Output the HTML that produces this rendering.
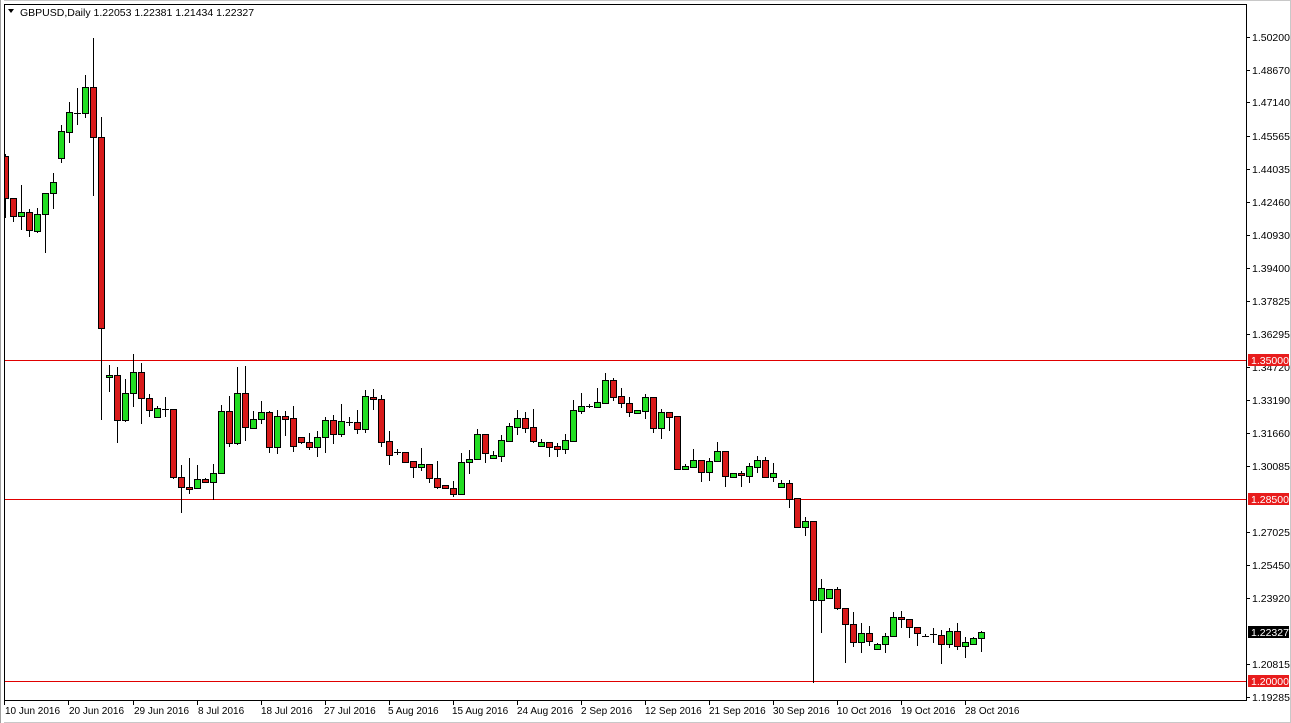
<!DOCTYPE html>
<html><head><meta charset="utf-8"><style>
html,body{margin:0;padding:0;background:#fff;width:1291px;height:723px;overflow:hidden}
svg{display:block;font-family:"Liberation Sans",sans-serif}
.w{stroke:#000;stroke-width:1}
.g{fill:#22dd22;stroke:#000;stroke-width:1}
.r{fill:#d81a1a;stroke:#000;stroke-width:1}
.ax{font-size:10.5px;fill:#000}
.dt{font-size:10px;fill:#000}
</style></head><body>
<svg width="1291" height="723" viewBox="0 0 1291 723">
<rect x="0.5" y="0.5" width="1290" height="722" fill="#fff" stroke="#c8c8c8"/>
<!-- horizontal levels -->
<rect x="4" y="360" width="1242" height="1" fill="#e00000"/>
<rect x="4" y="499" width="1242" height="1" fill="#e00000"/>
<rect x="4" y="681" width="1242" height="1" fill="#e00000"/>
<g id="c">
<line class="w" x1="5.5" x2="5.5" y1="154" y2="218"/><rect class="r" x="2.5" y="156.5" width="6" height="42"/>
<line class="w" x1="13.5" x2="13.5" y1="198" y2="222"/><rect class="r" x="10.5" y="198.5" width="6" height="18"/>
<line class="w" x1="21.5" x2="21.5" y1="185" y2="230"/><rect class="g" x="18.5" y="212.5" width="6" height="4"/>
<line class="w" x1="29.5" x2="29.5" y1="209" y2="237"/><rect class="r" x="26.5" y="212.5" width="6" height="18"/>
<line class="w" x1="37.5" x2="37.5" y1="208" y2="233"/><rect class="g" x="34.5" y="214.5" width="6" height="17"/>
<line class="w" x1="45.5" x2="45.5" y1="193" y2="253"/><rect class="g" x="42.5" y="193.5" width="6" height="21"/>
<line class="w" x1="53.5" x2="53.5" y1="173" y2="209"/><rect class="g" x="50.5" y="182.5" width="6" height="11"/>
<line class="w" x1="61.5" x2="61.5" y1="125" y2="163"/><rect class="g" x="58.5" y="131.5" width="6" height="27"/>
<line class="w" x1="69.5" x2="69.5" y1="102" y2="143"/><rect class="g" x="66.5" y="112.5" width="6" height="20"/>
<line class="w" x1="77.5" x2="77.5" y1="88" y2="125"/><line class="w" x1="74" x2="81" y1="113.5" y2="113.5"/>
<line class="w" x1="85.5" x2="85.5" y1="75" y2="118"/><rect class="g" x="82.5" y="87.5" width="6" height="26"/>
<line class="w" x1="93.5" x2="93.5" y1="38" y2="196"/><rect class="r" x="90.5" y="87.5" width="6" height="50"/>
<line class="w" x1="101.5" x2="101.5" y1="117" y2="420"/><rect class="r" x="98.5" y="137.5" width="6" height="191"/>
<line class="w" x1="109.5" x2="109.5" y1="365" y2="392"/><rect class="g" x="106.5" y="375.5" width="6" height="2"/>
<line class="w" x1="117.5" x2="117.5" y1="367" y2="443"/><rect class="r" x="114.5" y="375.5" width="6" height="45"/>
<line class="w" x1="125.5" x2="125.5" y1="379" y2="422"/><rect class="g" x="122.5" y="393.5" width="6" height="27"/>
<line class="w" x1="133.5" x2="133.5" y1="354" y2="407"/><rect class="g" x="130.5" y="372.5" width="6" height="21"/>
<line class="w" x1="141.5" x2="141.5" y1="363" y2="424"/><rect class="r" x="138.5" y="372.5" width="6" height="26"/>
<line class="w" x1="149.5" x2="149.5" y1="394" y2="417"/><rect class="r" x="146.5" y="398.5" width="6" height="12"/>
<line class="w" x1="157.5" x2="157.5" y1="406" y2="417"/><rect class="g" x="154.5" y="408.5" width="6" height="9"/>
<line class="w" x1="165.5" x2="165.5" y1="397" y2="417"/><line class="w" x1="162" x2="169" y1="409.5" y2="409.5"/>
<line class="w" x1="173.5" x2="173.5" y1="409" y2="479"/><rect class="r" x="170.5" y="409.5" width="6" height="68"/>
<line class="w" x1="181.5" x2="181.5" y1="465" y2="513"/><rect class="r" x="178.5" y="477.5" width="6" height="10"/>
<line class="w" x1="189.5" x2="189.5" y1="458" y2="494"/><rect class="r" x="186.5" y="487.5" width="6" height="2"/>
<line class="w" x1="197.5" x2="197.5" y1="465" y2="489"/><rect class="g" x="194.5" y="479.5" width="6" height="9"/>
<line class="w" x1="205.5" x2="205.5" y1="478" y2="483"/><rect class="r" x="202.5" y="479.5" width="6" height="3"/>
<line class="w" x1="213.5" x2="213.5" y1="464" y2="500"/><rect class="g" x="210.5" y="473.5" width="6" height="9"/>
<line class="w" x1="221.5" x2="221.5" y1="405" y2="473"/><rect class="g" x="218.5" y="411.5" width="6" height="62"/>
<line class="w" x1="229.5" x2="229.5" y1="396" y2="447"/><rect class="r" x="226.5" y="411.5" width="6" height="32"/>
<line class="w" x1="237.5" x2="237.5" y1="367" y2="445"/><rect class="g" x="234.5" y="393.5" width="6" height="50"/>
<line class="w" x1="245.5" x2="245.5" y1="366" y2="441"/><rect class="r" x="242.5" y="393.5" width="6" height="34"/>
<line class="w" x1="253.5" x2="253.5" y1="411" y2="429"/><rect class="g" x="250.5" y="419.5" width="6" height="9"/>
<line class="w" x1="261.5" x2="261.5" y1="401" y2="424"/><rect class="g" x="258.5" y="412.5" width="6" height="7"/>
<line class="w" x1="269.5" x2="269.5" y1="411" y2="453"/><rect class="r" x="266.5" y="412.5" width="6" height="35"/>
<line class="w" x1="277.5" x2="277.5" y1="410" y2="454"/><rect class="g" x="274.5" y="416.5" width="6" height="31"/>
<line class="w" x1="285.5" x2="285.5" y1="411" y2="436"/><rect class="r" x="282.5" y="416.5" width="6" height="3"/>
<line class="w" x1="293.5" x2="293.5" y1="406" y2="452"/><rect class="r" x="290.5" y="418.5" width="6" height="28"/>
<line class="w" x1="301.5" x2="301.5" y1="437" y2="444"/><rect class="r" x="298.5" y="437.5" width="6" height="5"/>
<line class="w" x1="309.5" x2="309.5" y1="433" y2="450"/><rect class="r" x="306.5" y="442.5" width="6" height="5"/>
<line class="w" x1="317.5" x2="317.5" y1="431" y2="457"/><rect class="g" x="314.5" y="437.5" width="6" height="10"/>
<line class="w" x1="325.5" x2="325.5" y1="417" y2="453"/><rect class="g" x="322.5" y="420.5" width="6" height="17"/>
<line class="w" x1="333.5" x2="333.5" y1="415" y2="444"/><rect class="r" x="330.5" y="420.5" width="6" height="14"/>
<line class="w" x1="341.5" x2="341.5" y1="404" y2="437"/><rect class="g" x="338.5" y="421.5" width="6" height="13"/>
<line class="w" x1="349.5" x2="349.5" y1="417" y2="426"/><line class="w" x1="346" x2="353" y1="422.5" y2="422.5"/>
<line class="w" x1="357.5" x2="357.5" y1="410" y2="434"/><rect class="r" x="354.5" y="422.5" width="6" height="7"/>
<line class="w" x1="365.5" x2="365.5" y1="390" y2="433"/><rect class="g" x="362.5" y="396.5" width="6" height="33"/>
<line class="w" x1="373.5" x2="373.5" y1="389" y2="410"/><rect class="r" x="370.5" y="397.5" width="6" height="2"/>
<line class="w" x1="381.5" x2="381.5" y1="395" y2="447"/><rect class="r" x="378.5" y="399.5" width="6" height="43"/>
<line class="w" x1="389.5" x2="389.5" y1="431" y2="465"/><rect class="r" x="386.5" y="441.5" width="6" height="14"/>
<line class="w" x1="397.5" x2="397.5" y1="449" y2="455"/><line class="w" x1="394" x2="401" y1="452.5" y2="452.5"/>
<line class="w" x1="405.5" x2="405.5" y1="452" y2="463"/><rect class="r" x="402.5" y="452.5" width="6" height="10"/>
<line class="w" x1="413.5" x2="413.5" y1="461" y2="478"/><rect class="r" x="410.5" y="461.5" width="6" height="6"/>
<line class="w" x1="421.5" x2="421.5" y1="448" y2="471"/><rect class="g" x="418.5" y="464.5" width="6" height="3"/>
<line class="w" x1="429.5" x2="429.5" y1="464" y2="483"/><rect class="r" x="426.5" y="464.5" width="6" height="14"/>
<line class="w" x1="437.5" x2="437.5" y1="461" y2="489"/><rect class="r" x="434.5" y="478.5" width="6" height="9"/>
<line class="w" x1="445.5" x2="445.5" y1="485" y2="488"/><rect class="r" x="442.5" y="485.5" width="6" height="3"/>
<line class="w" x1="453.5" x2="453.5" y1="481" y2="497"/><rect class="r" x="450.5" y="488.5" width="6" height="6"/>
<line class="w" x1="461.5" x2="461.5" y1="453" y2="494"/><rect class="g" x="458.5" y="462.5" width="6" height="32"/>
<line class="w" x1="469.5" x2="469.5" y1="450" y2="474"/><rect class="g" x="466.5" y="459.5" width="6" height="3"/>
<line class="w" x1="477.5" x2="477.5" y1="429" y2="459"/><rect class="g" x="474.5" y="434.5" width="6" height="25"/>
<line class="w" x1="485.5" x2="485.5" y1="434" y2="463"/><rect class="r" x="482.5" y="434.5" width="6" height="19"/>
<line class="w" x1="493.5" x2="493.5" y1="451" y2="458"/><rect class="g" x="490.5" y="455.5" width="6" height="3"/>
<line class="w" x1="501.5" x2="501.5" y1="435" y2="462"/><rect class="g" x="498.5" y="440.5" width="6" height="16"/>
<line class="w" x1="509.5" x2="509.5" y1="423" y2="441"/><rect class="g" x="506.5" y="426.5" width="6" height="15"/>
<line class="w" x1="517.5" x2="517.5" y1="410" y2="435"/><rect class="g" x="514.5" y="418.5" width="6" height="9"/>
<line class="w" x1="525.5" x2="525.5" y1="412" y2="433"/><rect class="r" x="522.5" y="418.5" width="6" height="10"/>
<line class="w" x1="533.5" x2="533.5" y1="409" y2="443"/><rect class="r" x="530.5" y="427.5" width="6" height="14"/>
<line class="w" x1="541.5" x2="541.5" y1="439" y2="446"/><rect class="g" x="538.5" y="442.5" width="6" height="4"/>
<line class="w" x1="549.5" x2="549.5" y1="442" y2="457"/><rect class="r" x="546.5" y="442.5" width="6" height="5"/>
<line class="w" x1="557.5" x2="557.5" y1="443" y2="457"/><rect class="r" x="554.5" y="446.5" width="6" height="3"/>
<line class="w" x1="565.5" x2="565.5" y1="434" y2="454"/><rect class="g" x="562.5" y="440.5" width="6" height="9"/>
<line class="w" x1="573.5" x2="573.5" y1="400" y2="441"/><rect class="g" x="570.5" y="410.5" width="6" height="31"/>
<line class="w" x1="581.5" x2="581.5" y1="393" y2="414"/><rect class="g" x="578.5" y="406.5" width="6" height="5"/>
<line class="w" x1="589.5" x2="589.5" y1="404" y2="408"/><line class="w" x1="586" x2="593" y1="406.5" y2="406.5"/>
<line class="w" x1="597.5" x2="597.5" y1="388" y2="407"/><rect class="g" x="594.5" y="402.5" width="6" height="5"/>
<line class="w" x1="605.5" x2="605.5" y1="373" y2="404"/><rect class="g" x="602.5" y="380.5" width="6" height="23"/>
<line class="w" x1="613.5" x2="613.5" y1="378" y2="401"/><rect class="r" x="610.5" y="380.5" width="6" height="17"/>
<line class="w" x1="621.5" x2="621.5" y1="388" y2="408"/><rect class="r" x="618.5" y="396.5" width="6" height="7"/>
<line class="w" x1="629.5" x2="629.5" y1="397" y2="417"/><rect class="r" x="626.5" y="403.5" width="6" height="9"/>
<line class="w" x1="637.5" x2="637.5" y1="410" y2="414"/><rect class="g" x="634.5" y="410.5" width="6" height="3"/>
<line class="w" x1="645.5" x2="645.5" y1="394" y2="419"/><rect class="g" x="642.5" y="397.5" width="6" height="14"/>
<line class="w" x1="653.5" x2="653.5" y1="397" y2="433"/><rect class="r" x="650.5" y="397.5" width="6" height="31"/>
<line class="w" x1="661.5" x2="661.5" y1="409" y2="439"/><rect class="g" x="658.5" y="412.5" width="6" height="16"/>
<line class="w" x1="669.5" x2="669.5" y1="412" y2="431"/><rect class="r" x="666.5" y="412.5" width="6" height="5"/>
<line class="w" x1="677.5" x2="677.5" y1="416" y2="469"/><rect class="r" x="674.5" y="416.5" width="6" height="53"/>
<line class="w" x1="685.5" x2="685.5" y1="464" y2="469"/><rect class="g" x="682.5" y="466.5" width="6" height="3"/>
<line class="w" x1="693.5" x2="693.5" y1="449" y2="467"/><rect class="g" x="690.5" y="460.5" width="6" height="7"/>
<line class="w" x1="701.5" x2="701.5" y1="460" y2="482"/><rect class="r" x="698.5" y="460.5" width="6" height="12"/>
<line class="w" x1="709.5" x2="709.5" y1="458" y2="481"/><rect class="g" x="706.5" y="461.5" width="6" height="11"/>
<line class="w" x1="717.5" x2="717.5" y1="442" y2="461"/><rect class="g" x="714.5" y="451.5" width="6" height="10"/>
<line class="w" x1="725.5" x2="725.5" y1="451" y2="487"/><rect class="r" x="722.5" y="451.5" width="6" height="25"/>
<line class="w" x1="733.5" x2="733.5" y1="473" y2="478"/><rect class="g" x="730.5" y="473.5" width="6" height="4"/>
<line class="w" x1="741.5" x2="741.5" y1="471" y2="487"/><rect class="r" x="738.5" y="473.5" width="6" height="2"/>
<line class="w" x1="749.5" x2="749.5" y1="463" y2="483"/><rect class="g" x="746.5" y="466.5" width="6" height="10"/>
<line class="w" x1="757.5" x2="757.5" y1="456" y2="473"/><rect class="g" x="754.5" y="460.5" width="6" height="7"/>
<line class="w" x1="765.5" x2="765.5" y1="457" y2="478"/><rect class="r" x="762.5" y="460.5" width="6" height="17"/>
<line class="w" x1="773.5" x2="773.5" y1="463" y2="482"/><rect class="g" x="770.5" y="473.5" width="6" height="4"/>
<line class="w" x1="781.5" x2="781.5" y1="480" y2="487"/><rect class="g" x="778.5" y="483.5" width="6" height="4"/>
<line class="w" x1="789.5" x2="789.5" y1="480" y2="508"/><rect class="r" x="786.5" y="483.5" width="6" height="16"/>
<line class="w" x1="797.5" x2="797.5" y1="498" y2="528"/><rect class="r" x="794.5" y="498.5" width="6" height="29"/>
<line class="w" x1="805.5" x2="805.5" y1="517" y2="536"/><rect class="g" x="802.5" y="521.5" width="6" height="6"/>
<line class="w" x1="813.5" x2="813.5" y1="521" y2="683"/><rect class="r" x="810.5" y="521.5" width="6" height="79"/>
<line class="w" x1="821.5" x2="821.5" y1="579" y2="633"/><rect class="g" x="818.5" y="588.5" width="6" height="12"/>
<line class="w" x1="829.5" x2="829.5" y1="589" y2="598"/><rect class="g" x="826.5" y="589.5" width="6" height="9"/>
<line class="w" x1="837.5" x2="837.5" y1="587" y2="610"/><rect class="r" x="834.5" y="589.5" width="6" height="19"/>
<line class="w" x1="845.5" x2="845.5" y1="608" y2="663"/><rect class="r" x="842.5" y="608.5" width="6" height="16"/>
<line class="w" x1="853.5" x2="853.5" y1="612" y2="647"/><rect class="r" x="850.5" y="624.5" width="6" height="18"/>
<line class="w" x1="861.5" x2="861.5" y1="623" y2="653"/><rect class="g" x="858.5" y="633.5" width="6" height="9"/>
<line class="w" x1="869.5" x2="869.5" y1="626" y2="646"/><rect class="r" x="866.5" y="633.5" width="6" height="8"/>
<line class="w" x1="877.5" x2="877.5" y1="643" y2="650"/><rect class="g" x="874.5" y="644.5" width="6" height="5"/>
<line class="w" x1="885.5" x2="885.5" y1="633" y2="653"/><rect class="g" x="882.5" y="636.5" width="6" height="8"/>
<line class="w" x1="893.5" x2="893.5" y1="612" y2="636"/><rect class="g" x="890.5" y="617.5" width="6" height="19"/>
<line class="w" x1="901.5" x2="901.5" y1="611" y2="628"/><rect class="r" x="898.5" y="617.5" width="6" height="2"/>
<line class="w" x1="909.5" x2="909.5" y1="619" y2="638"/><rect class="r" x="906.5" y="619.5" width="6" height="8"/>
<line class="w" x1="917.5" x2="917.5" y1="627" y2="646"/><rect class="r" x="914.5" y="627.5" width="6" height="6"/>
<line class="w" x1="925.5" x2="925.5" y1="634" y2="637"/><line class="w" x1="922" x2="929" y1="636.5" y2="636.5"/>
<line class="w" x1="933.5" x2="933.5" y1="628" y2="643"/><line class="w" x1="930" x2="937" y1="634.5" y2="634.5"/>
<line class="w" x1="941.5" x2="941.5" y1="630" y2="664"/><rect class="r" x="938.5" y="635.5" width="6" height="9"/>
<line class="w" x1="949.5" x2="949.5" y1="628" y2="648"/><rect class="g" x="946.5" y="631.5" width="6" height="13"/>
<line class="w" x1="957.5" x2="957.5" y1="623" y2="650"/><rect class="r" x="954.5" y="631.5" width="6" height="15"/>
<line class="w" x1="965.5" x2="965.5" y1="637" y2="658"/><rect class="g" x="962.5" y="642.5" width="6" height="4"/>
<line class="w" x1="973.5" x2="973.5" y1="637" y2="644"/><rect class="g" x="970.5" y="638.5" width="6" height="6"/>
<line class="w" x1="981.5" x2="981.5" y1="631" y2="652"/><rect class="g" x="978.5" y="632.5" width="6" height="6"/>
</g>
<!-- plot frame -->
<rect x="4.5" y="4.5" width="1242" height="696" fill="none" stroke="#000"/>
<rect x="0" y="0" width="4" height="723" fill="#fff"/>
<line x1="0.5" x2="0.5" y1="0" y2="723" stroke="#a0a0a0"/>
<!-- header -->
<path d="M8 9 L14 9 L11 13 Z" fill="#000"/>
<text x="20" y="16" class="ax">GBPUSD,Daily  1.22053 1.22381 1.21434 1.22327</text>
<!-- price axis -->
<g class="ax">
<g stroke="#000">
<line x1="1246" x2="1250" y1="37.5" y2="37.5"/><line x1="1246" x2="1250" y1="70.5" y2="70.5"/><line x1="1246" x2="1250" y1="102.5" y2="102.5"/><line x1="1246" x2="1250" y1="136.5" y2="136.5"/><line x1="1246" x2="1250" y1="169.5" y2="169.5"/><line x1="1246" x2="1250" y1="202.5" y2="202.5"/><line x1="1246" x2="1250" y1="235.5" y2="235.5"/><line x1="1246" x2="1250" y1="268.5" y2="268.5"/><line x1="1246" x2="1250" y1="301.5" y2="301.5"/><line x1="1246" x2="1250" y1="334.5" y2="334.5"/><line x1="1246" x2="1250" y1="367.5" y2="367.5"/><line x1="1246" x2="1250" y1="400.5" y2="400.5"/><line x1="1246" x2="1250" y1="433.5" y2="433.5"/><line x1="1246" x2="1250" y1="466.5" y2="466.5"/><line x1="1246" x2="1250" y1="532.5" y2="532.5"/><line x1="1246" x2="1250" y1="565.5" y2="565.5"/><line x1="1246" x2="1250" y1="598.5" y2="598.5"/><line x1="1246" x2="1250" y1="664.5" y2="664.5"/><line x1="1246" x2="1250" y1="697.5" y2="697.5"/>
</g>
<text x="1252" y="41">1.50200</text><text x="1252" y="74">1.48670</text><text x="1252" y="106">1.47140</text><text x="1252" y="140">1.45565</text><text x="1252" y="173">1.44035</text><text x="1252" y="206">1.42460</text><text x="1252" y="239">1.40930</text><text x="1252" y="272">1.39400</text><text x="1252" y="305">1.37825</text><text x="1252" y="338">1.36295</text><text x="1252" y="371">1.34720</text><text x="1252" y="404">1.33190</text><text x="1252" y="437">1.31660</text><text x="1252" y="470">1.30085</text><text x="1252" y="536">1.27025</text><text x="1252" y="569">1.25450</text><text x="1252" y="602">1.23920</text><text x="1252" y="668">1.20815</text><text x="1252" y="701">1.19285</text>
<rect x="1248" y="354" width="41" height="12" fill="#e81c1c"/><text x="1251" y="364" fill="#fff">1.35000</text>
<rect x="1248" y="493" width="41" height="12" fill="#e81c1c"/><text x="1251" y="503" fill="#fff">1.28500</text>
<rect x="1248" y="675" width="41" height="12" fill="#e81c1c"/><text x="1251" y="685" fill="#fff">1.20000</text>
<rect x="1248" y="626" width="41" height="12" fill="#000"/><text x="1251" y="636" fill="#fff">1.22327</text>
</g>
<!-- date axis -->
<g stroke="#000">
<line x1="4.5" x2="4.5" y1="700" y2="705"/><line x1="68.5" x2="68.5" y1="700" y2="705"/><line x1="133.5" x2="133.5" y1="700" y2="705"/><line x1="197.5" x2="197.5" y1="700" y2="705"/><line x1="261.5" x2="261.5" y1="700" y2="705"/><line x1="325.5" x2="325.5" y1="700" y2="705"/><line x1="389.5" x2="389.5" y1="700" y2="705"/><line x1="453.5" x2="453.5" y1="700" y2="705"/><line x1="517.5" x2="517.5" y1="700" y2="705"/><line x1="581.5" x2="581.5" y1="700" y2="705"/><line x1="645.5" x2="645.5" y1="700" y2="705"/><line x1="709.5" x2="709.5" y1="700" y2="705"/><line x1="773.5" x2="773.5" y1="700" y2="705"/><line x1="837.5" x2="837.5" y1="700" y2="705"/><line x1="901.5" x2="901.5" y1="700" y2="705"/><line x1="965.5" x2="965.5" y1="700" y2="705"/>
</g>
<g class="dt">
<text x="5" y="714">10 Jun 2016</text><text x="69" y="714">20 Jun 2016</text><text x="134" y="714">29 Jun 2016</text><text x="198" y="714">8 Jul 2016</text><text x="261" y="714">18 Jul 2016</text><text x="324" y="714">27 Jul 2016</text><text x="388" y="714">5 Aug 2016</text><text x="452" y="714">15 Aug 2016</text><text x="517" y="714">24 Aug 2016</text><text x="581" y="714">2 Sep 2016</text><text x="645" y="714">12 Sep 2016</text><text x="709" y="714">21 Sep 2016</text><text x="773" y="714">30 Sep 2016</text><text x="837" y="714">10 Oct 2016</text><text x="901" y="714">19 Oct 2016</text><text x="965" y="714">28 Oct 2016</text>
</g>
</svg>
</body></html>
